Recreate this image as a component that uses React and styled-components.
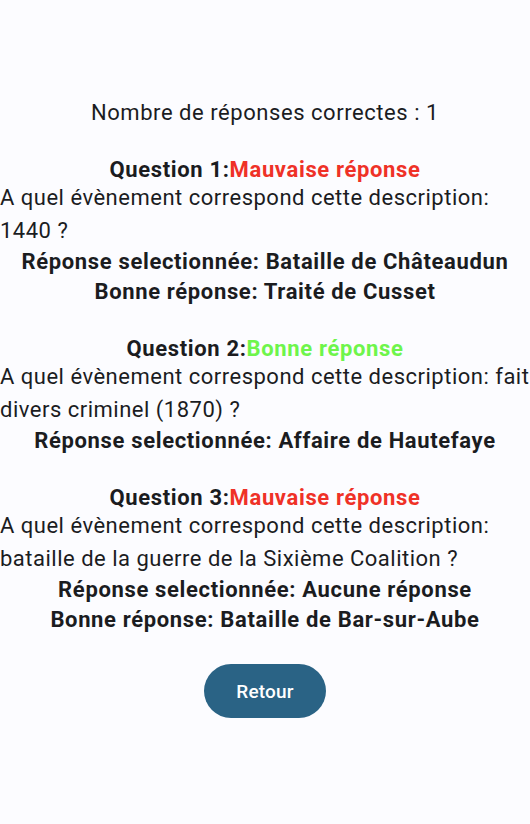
import styled, { createGlobalStyle } from "styled-components";

const GlobalStyle = createGlobalStyle`
  html, body {
    margin: 0;
    padding: 0;
    background: #fcfcff;
  }
  body {
    font-family: Roboto, "Noto Sans", sans-serif;
    color: #1b1c1f;
  }
`;

const Screen = styled.div`
  width: 530px;
  min-height: 824px;
  display: flex;
  flex-direction: column;
  align-items: center;
  padding-top: 101px;
  box-sizing: border-box;
  overflow: hidden;
`;

const Score = styled.p`
  margin: 0 0 33px;
  font-size: 22px;
  line-height: 24px;
  letter-spacing: 0.55px;
  text-align: center;
`;

const QuestionBlock = styled.section`
  width: 100%;
  display: flex;
  flex-direction: column;
  margin-bottom: 30px;
`;

const QuestionTitle = styled.h2`
  margin: 0;
  font-size: 22px;
  line-height: 24px;
  font-weight: 700;
  letter-spacing: 0.65px;
  text-align: center;
`;

const Verdict = styled.span`
  color: ${(props) => (props.$ok ? "#6ef54b" : "#ef3127")};
`;

const Description = styled.p`
  margin: 0 -8px 0 0;
  font-size: 22px;
  line-height: 32.5px;
  letter-spacing: 0.5px;
  text-align: left;
`;

const AnswerLine = styled.p`
  margin: 0;
  font-size: 22px;
  line-height: 30px;
  font-weight: 700;
  letter-spacing: 0.65px;
  text-align: center;
`;

const BackButton = styled.button`
  margin-top: -1px;
  width: 122px;
  height: 54px;
  border: none;
  border-radius: 27px;
  background: #2a6385;
  color: #ffffff;
  font-family: Roboto, "Noto Sans", sans-serif;
  font-size: 19px;
  font-weight: 500;
  letter-spacing: 0.2px;
  cursor: pointer;
`;

const results = [
  {
    ok: false,
    question:
      "A quel évènement correspond cette description: 1440 ?",
    selected: "Bataille de Châteaudun",
    correct: "Traité de Cusset",
  },
  {
    ok: true,
    question:
      "A quel évènement correspond cette description: fait divers criminel (1870) ?",
    selected: "Affaire de Hautefaye",
  },
  {
    ok: false,
    question:
      "A quel évènement correspond cette description: bataille de la guerre de la Sixième Coalition ?",
    selected: "Aucune réponse",
    correct: "Bataille de Bar-sur-Aube",
  },
];

const App = () => {
  const goodCount = results.filter((r) => r.ok).length;

  return (
    <Screen>
      <GlobalStyle />
      <Score>Nombre de réponses correctes : {goodCount}</Score>
      {results.map((r, i) => (
        <QuestionBlock key={i}>
          <QuestionTitle>
            Question {i + 1}:
            <Verdict $ok={r.ok}>
              {r.ok ? "Bonne réponse" : "Mauvaise réponse"}
            </Verdict>
          </QuestionTitle>
          <Description>{r.question}</Description>
          <AnswerLine>Réponse selectionnée: {r.selected}</AnswerLine>
          {!r.ok && <AnswerLine>Bonne réponse: {r.correct}</AnswerLine>}
        </QuestionBlock>
      ))}
      <BackButton>Retour</BackButton>
    </Screen>
  );
};

export default App;
